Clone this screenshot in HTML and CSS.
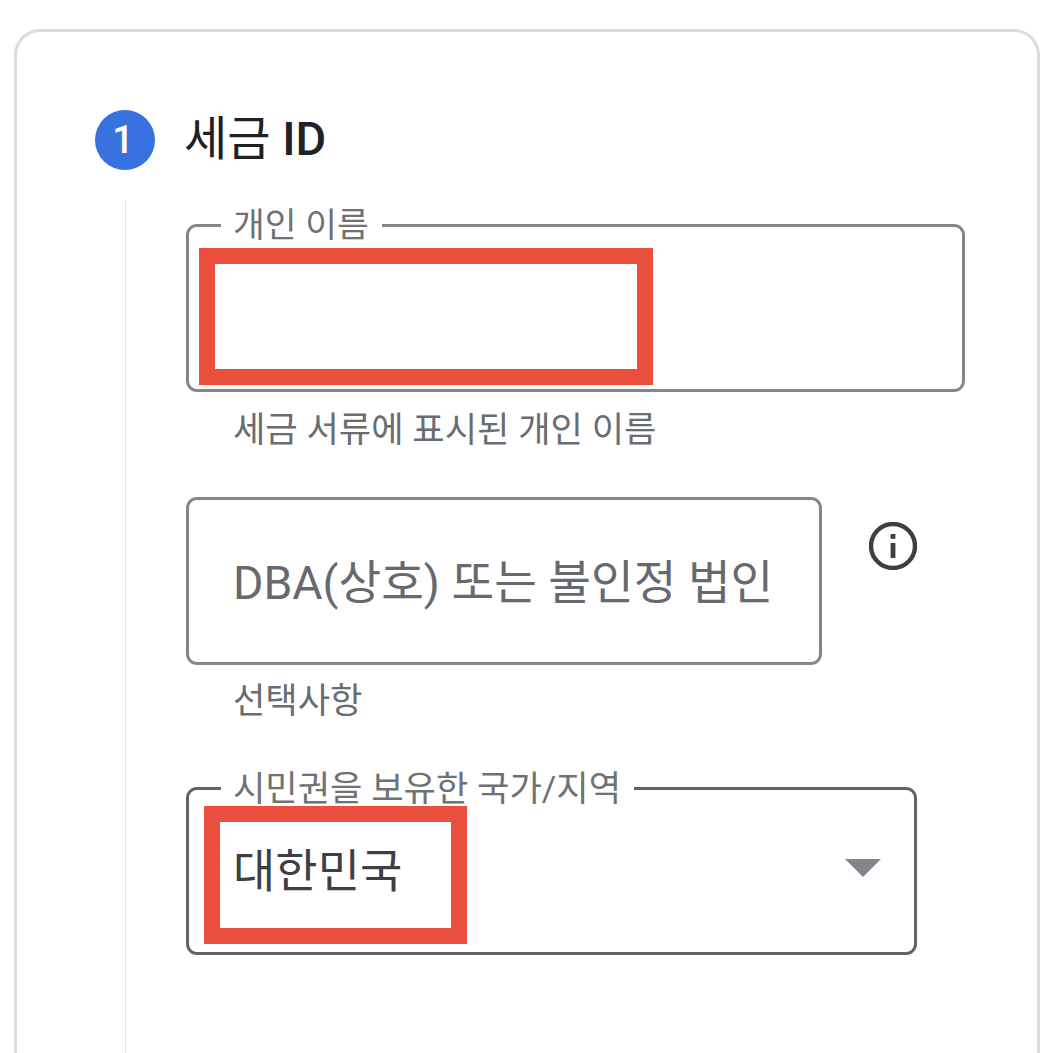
FILE: index.html
```html
<!DOCTYPE html>
<html lang="ko">
<head>
<meta charset="utf-8">
<title>세금 ID</title>
<link rel="stylesheet" href="styles.css">
</head>
<body>
<main class="card">
  <header class="step-head">
    <span class="step-num">1</span>
    <h1 class="step-title">세금 <span class="latin-strong">ID</span></h1>
  </header>
  <section class="step-body">
    <div class="field-group">
      <div class="field field-name">
        <span class="field-label">개인 이름</span>
        <span class="redact redact-name"></span>
      </div>
      <p class="hint">세금 서류에 표시된 개인 이름</p>
    </div>
    <div class="field-group group-dba">
      <div class="dba-row">
        <div class="field field-dba">
          <span class="placeholder">DBA(상호) 또는 불인정 법인</span>
        </div>
        <svg class="info-icon" viewBox="0 0 48 48" aria-hidden="true">
          <circle cx="24" cy="24" r="22" fill="none" stroke="#3c4043" stroke-width="4.4"/>
          <rect x="21.6" y="12" width="4.8" height="4.8" fill="#3c4043"/>
          <rect x="21.6" y="21" width="4.8" height="15" fill="#3c4043"/>
        </svg>
      </div>
      <p class="hint hint-optional">선택사항</p>
    </div>
    <div class="field field-country">
      <span class="field-label">시민권을 보유한 국가/지역</span>
      <span class="value">대한민국</span>
      <span class="redact redact-country"></span>
      <svg class="caret" viewBox="0 0 36 18" aria-hidden="true"><path d="M0 0H36L18 18Z" fill="#80868b"/></svg>
    </div>
  </section>
</main>
</body>
</html>
```
FILE: styles.css
```css
* { box-sizing: border-box; }
html, body { margin: 0; height: 1053px; overflow: hidden; background: #fff; }
body {
  padding: 29px 13px 0 14px;
  font-family: Roboto, "Noto Sans CJK KR", sans-serif;
}
.card {
  height: 1024px;
  padding: 78px 0 0 78px;
  border: 3px solid #dadce0;
  border-bottom: 0;
  border-radius: 26px 26px 0 0;
  background: #fff;
}
.step-head { display: flex; align-items: center; gap: 30px; height: 60px; }
.step-num {
  width: 60px; height: 60px;
  display: flex; align-items: center; justify-content: center;
  padding-right: 4px;
  border-radius: 50%;
  background: #3871e0;
  color: #fff;
  font-size: 38px;
  font-weight: 500;
}
.step-title { margin: -2px 0 0 -1px; font-size: 47px; font-weight: 400; color: #202124; line-height: 60px; }
.latin-strong { font-weight: 500; }
.step-body {
  margin: 30px 0 0 30px;
  padding: 24px 0 0 60px;
  border-left: 1px solid #dfe0e3;
  height: 853px;
}
.field {
  position: relative;
  height: 168px;
  border: 3px solid #85868b;
  border-radius: 11px;
  background: #fff;
}
.field-name { width: 779px; }
.field-dba { width: 636px; display: flex; align-items: center; }
.field-country { width: 731px; margin-top: 66px; border-color: #626367; display: flex; align-items: center; }
.field-label {
  position: absolute;
  left: 32px; top: -22px;
  padding: 0 13px 0 12px;
  background: #fff;
  color: #6f7175;
  font-size: 34.6px;
  line-height: 40px;
  white-space: nowrap;
}
.field-country .field-label { top: -21px; font-size: 35.2px; }
.hint {
  margin: 18px 0 0 47px;
  color: #696c70;
  font-size: 35.2px;
  line-height: 40px;
}
.group-dba { margin-top: 47px; }
.hint-optional { margin-top: 16px; }
.dba-row { display: flex; align-items: flex-start; gap: 47px; }
.info-icon { width: 48px; height: 48px; margin-top: 25px; flex: none; }
.placeholder { margin-left: 44px; color: #66696d; font-size: 46.4px; white-space: nowrap; margin-top: -6px; }
.value { margin-left: 44px; color: #3c4043; font-size: 46px; margin-top: -9px; }
.redact { position: absolute; border-style: solid; border-color: #ea4e3d; }
.redact-name { left: 10px; top: 21px; width: 454px; height: 137px; border-width: 16px; }
.redact-country { left: 15px; top: 16px; width: 263px; height: 138px; border-width: 16px; }
.caret { position: absolute; left: 656px; top: 69px; width: 36px; height: 18px; }
```
